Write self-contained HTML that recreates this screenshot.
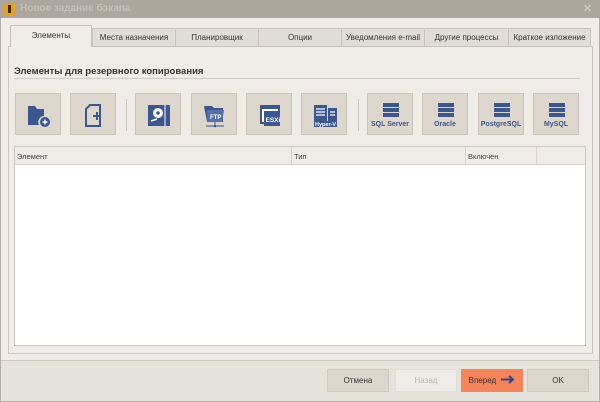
<!DOCTYPE html>
<html><head><meta charset="utf-8"><style>
*{box-sizing:border-box;margin:0;padding:0}
body{width:600px;height:402px;overflow:hidden;background:#efece7;font-family:"Liberation Sans",sans-serif;position:relative;font-size:8px;color:#333}
.abs{position:absolute}
.title{left:0;top:0;width:600px;height:18px;background:#aca69f}
.title span{position:absolute;left:20px;top:3px;font-size:10px;font-weight:bold;color:#c4bfb8}
.logo{left:4px;top:3px;width:11px;height:12px;background:#e6a21e;border-radius:1px}
.logo:after{content:"";position:absolute;left:4px;top:2px;width:3px;height:8px;background:#3a2a10}
.x{right:8px;top:2px;color:#d6d2cc;font-size:11px}
.border{left:0;top:18px;width:600px;height:384px;border:1px solid #b3aea7;border-top:none}
.panel{left:8px;top:46px;width:585px;height:308px;border:1px solid #cbc6bf;background:#efece7}
.tab{top:28px;height:19px;border:1px solid #c7c2bb;background:#e0dcd6;font-size:8px;text-align:center;line-height:17px;color:#333}
.tab.act{top:25px;height:22px;background:#efece7;border-bottom:none;line-height:20px}
.h{left:14px;top:66px;font-size:9.5px;font-weight:bold;color:#333}
.hl{left:14px;top:78px;width:566px;height:1px;background:#cfcac3}
.b{top:93px;width:46px;height:42px;background:#ddd6cd;border:1px solid #cbc4ba}
.b svg{position:absolute;left:0;top:0}
.b .l{position:absolute;left:0;width:100%;top:27px;text-align:center;font-size:7px;font-weight:bold;color:#3a5690}
.sep{top:99px;width:1px;height:32px;background:#c9c4bc}
.tbl{left:14px;top:146px;width:572px;height:200px;border:1px solid #cbc6bf;background:#fff}
.th{left:0;top:0;width:570px;height:18px;background:#efece7;border-bottom:1px solid #d6d1ca}
.th span{position:absolute;top:5px;font-size:7.5px;color:#444}
.cs{position:absolute;top:0;width:1px;height:18px;background:#d6d1ca}
.foot{left:1px;top:360px;width:598px;height:41px;background:#e5e1db;border-top:1px solid #cdc8c1}
.btn{top:369px;height:23px;width:62px;border:1px solid #cfc8bf;background:#ddd6cd;text-align:center;line-height:21px;font-size:8px;color:#333}
</style></head><body>
<div class="abs title"><span>Новое задание бэкапа</span></div>
<div class="abs logo"></div>
<div class="abs x">✕</div>
<div class="abs border"></div>
<div class="abs panel"></div>
<div class="abs tab act" style="left:10px;width:82px">Элементы</div>
<div class="abs tab" style="left:92px;width:84px">Места назначения</div>
<div class="abs tab" style="left:175px;width:84px">Планировщик</div>
<div class="abs tab" style="left:258px;width:84px">Опции</div>
<div class="abs tab" style="left:341px;width:84px">Уведомления e-mail</div>
<div class="abs tab" style="left:424px;width:85px">Другие процессы</div>
<div class="abs tab" style="left:508px;width:83px">Краткое изложение</div>
<div class="abs h">Элементы для резервного копирования</div>
<div class="abs hl"></div>

<div class="abs b" style="left:15px"><svg width="46" height="42"><path d="M12 12h7l2 3h7v7a6 6 0 0 0-5 9h-11z" fill="#3b5790"/><circle cx="29" cy="28" r="5" fill="#3b5790"/><path d="M26.5 28h5M29 25.5v5" stroke="#fff" stroke-width="1.4"/></svg></div>
<div class="abs b" style="left:70px"><svg width="46" height="42"><path d="M19 11h10v21h-14v-17z" fill="none" stroke="#3b5790" stroke-width="2"/><path d="M22 22h8M26 18v8" stroke="#3b5790" stroke-width="2"/></svg></div>
<div class="abs sep" style="left:126px"></div>
<div class="abs b" style="left:135px"><svg width="46" height="42"><rect x="12" y="11" width="22" height="21" fill="#3b5790"/><circle cx="22" cy="19" r="5" fill="#fff"/><circle cx="22" cy="19" r="1.8" fill="#3b5790"/><path d="M15 27l6-2" stroke="#fff" stroke-width="1.6"/><path d="M29 11v21" stroke="#fff" stroke-width="1"/></svg></div>
<div class="abs b" style="left:191px"><svg width="46" height="42"><path d="M12 12h8l2 2h9v14h-16z" fill="#3b5790"/><path d="M15 16h17l-2 12h-15z" fill="#5570a8"/><text x="18" y="25" font-size="6" font-weight="bold" fill="#fff" font-family="Liberation Sans">FTP</text><path d="M23 28v3M14 32h18" stroke="#3b5790" stroke-width="1"/><circle cx="23" cy="32" r="1.3" fill="#3b5790"/></svg></div>
<div class="abs b" style="left:246px"><svg width="46" height="42"><rect x="13" y="11" width="20" height="19" fill="#3b5790"/><rect x="15" y="15" width="16" height="13" fill="#fff"/><rect x="17" y="17" width="16" height="15" fill="#3b5790"/><text x="18.5" y="28" font-size="6.5" font-weight="bold" fill="#fff" font-family="Liberation Sans">ESXi</text></svg></div>
<div class="abs b" style="left:301px"><svg width="46" height="42"><rect x="12" y="11" width="13" height="16" fill="#3b5790"/><rect x="26" y="14" width="9" height="13" fill="#3b5790"/><path d="M14 15h9M14 18h9M14 21h9M28 18h5M28 21h5" stroke="#fff" stroke-width="1.2"/><rect x="12" y="27" width="23" height="6" fill="#3b5790"/><text x="13" y="32" font-size="5.5" font-weight="bold" fill="#fff" font-family="Liberation Sans">Hyper-V</text></svg></div>
<div class="abs sep" style="left:358px"></div>

<div class="abs b" style="left:367px"><svg width="46" height="42"><rect x="15" y="9" width="16" height="4" fill="#3b5790"/><rect x="15" y="14" width="16" height="4" fill="#3b5790"/><rect x="15" y="19" width="16" height="4" fill="#3b5790"/></svg><div class="l">SQL Server</div></div>
<div class="abs b" style="left:422px"><svg width="46" height="42"><rect x="15" y="9" width="16" height="4" fill="#3b5790"/><rect x="15" y="14" width="16" height="4" fill="#3b5790"/><rect x="15" y="19" width="16" height="4" fill="#3b5790"/></svg><div class="l">Oracle</div></div>
<div class="abs b" style="left:478px"><svg width="46" height="42"><rect x="15" y="9" width="16" height="4" fill="#3b5790"/><rect x="15" y="14" width="16" height="4" fill="#3b5790"/><rect x="15" y="19" width="16" height="4" fill="#3b5790"/></svg><div class="l">PostgreSQL</div></div>
<div class="abs b" style="left:533px"><svg width="46" height="42"><rect x="15" y="9" width="16" height="4" fill="#3b5790"/><rect x="15" y="14" width="16" height="4" fill="#3b5790"/><rect x="15" y="19" width="16" height="4" fill="#3b5790"/></svg><div class="l">MySQL</div></div>

<div class="abs tbl"><div class="abs th"><span style="left:2px">Элемент</span><div class="cs" style="left:276px"></div><span style="left:279px">Тип</span><div class="cs" style="left:450px"></div><span style="left:453px">Включен</span><div class="cs" style="left:521px"></div></div></div>

<div class="abs foot"></div>
<div class="abs btn" style="left:327px">Отмена</div>
<div class="abs btn" style="left:395px;background:#efece7;border-color:#e2ded8;color:#b8b3ad">Назад</div>
<div class="abs btn" style="left:461px;background:#f5845a;border-color:#f5845a;color:#333">Вперед <svg width="14" height="9" style="vertical-align:-1px;margin-left:3px"><path d="M0 4.5h12M8 1l4 3.5-4 3.5" stroke="#2a4a8a" stroke-width="2" fill="none"/></svg></div>
<div class="abs btn" style="left:527px">OK</div>
</body></html>
